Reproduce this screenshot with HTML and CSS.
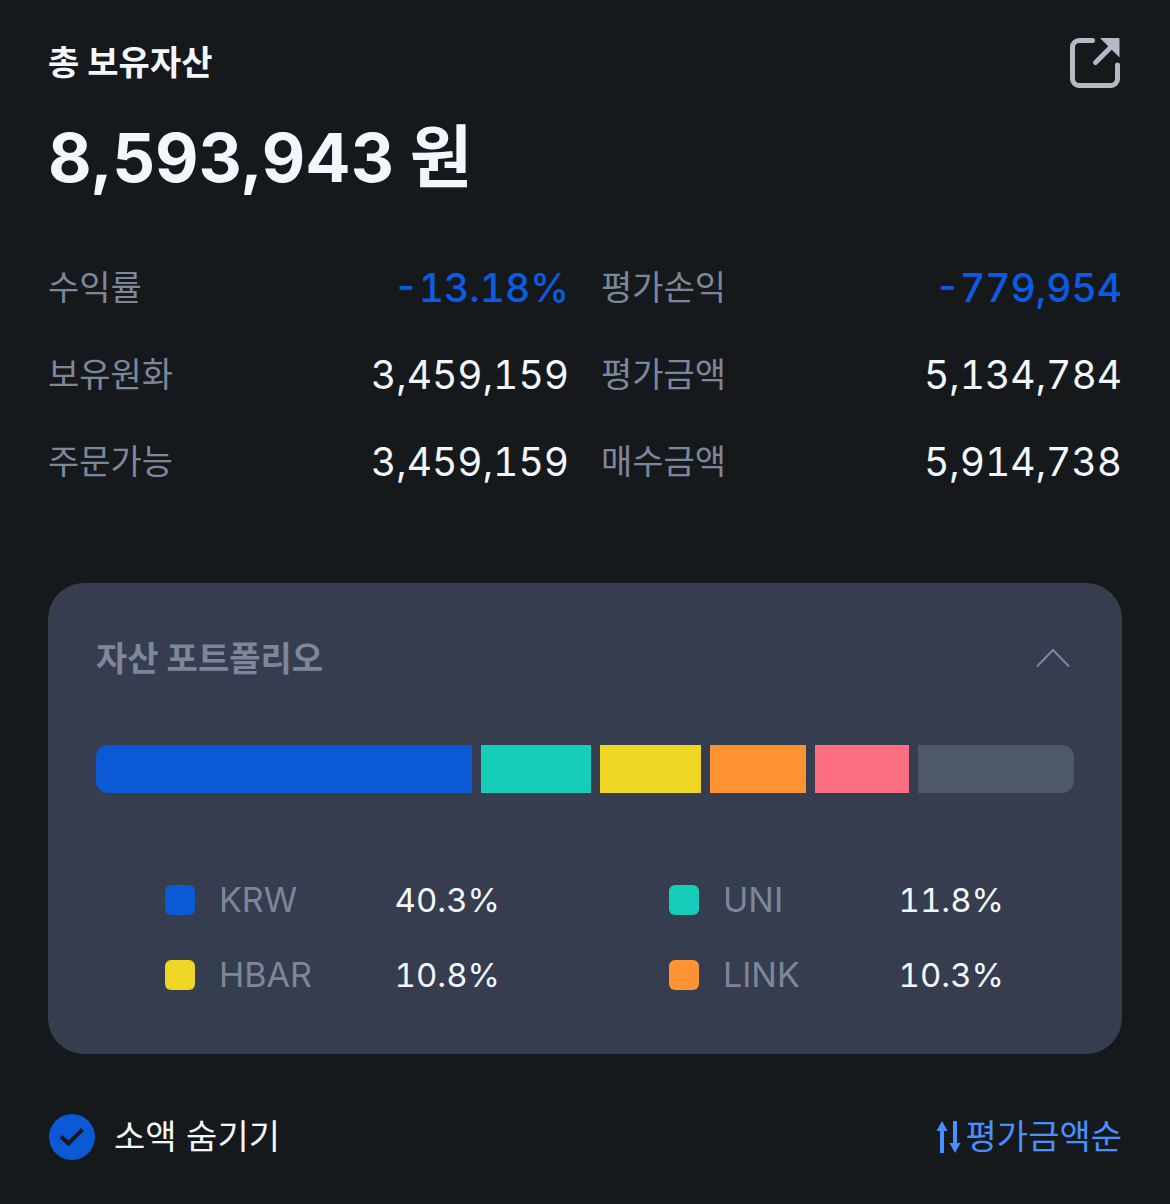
FILE: index.html
```html
<!DOCTYPE html>
<html lang="ko">
<head>
    <meta charset="UTF-8">
    <meta name="viewport" content="width=device-width, initial-scale=1.0">
    <title>총 보유자산</title>
    <link rel="stylesheet" href="styles.css">
</head>
<body>
    <main class="container">
        <header class="topo">
            <h1>총 보유자산</h1>
            <button type="button" class="btn-share" aria-label="공유">
                <svg width="52" height="52" viewBox="0 0 52 52" fill="none">
                    <path d="M22.500 3.500H9A6.500 6.500 0 0 0 2.500 10V42A6.500 6.500 0 0 0 9 48.500H41A6.500 6.500 0 0 0 47.500 42V28" stroke="#b3bac6" stroke-width="5" stroke-linecap="round"/>
                    <path d="M25.500 25.500L40 11" stroke="#b3bac6" stroke-width="5" stroke-linecap="round"/>
                    <path d="M30 1H48.500a1 1 0 0 1 1 1V20.500Z" fill="#b3bac6"/>
                </svg>
            </button>
        </header>

        <p class="total">8,593,943 <span class="won">원</span></p>

        <dl class="resumo">
            <div class="item"><dt>수익률</dt><dd class="queda">-13.18%</dd></div>
            <div class="item"><dt>평가손익</dt><dd class="queda">-779,954</dd></div>
            <div class="item"><dt>보유원화</dt><dd>3,459,159</dd></div>
            <div class="item"><dt>평가금액</dt><dd>5,134,784</dd></div>
            <div class="item"><dt>주문가능</dt><dd>3,459,159</dd></div>
            <div class="item"><dt>매수금액</dt><dd>5,914,738</dd></div>
        </dl>

        <section class="card">
            <div class="card-topo">
                <h2>자산 포트폴리오</h2>
                <button type="button" class="btn-toggle" aria-label="접기">
                    <svg width="36" height="22" viewBox="0 0 36 22" fill="none">
                        <path d="M2 18.500L18 2L34 18.500" stroke="#7d8799" stroke-width="2"/>
                    </svg>
                </button>
            </div>

            <div class="barra">
                <span class="krw" style="flex-grow: 376"></span>
                <span class="uni" style="flex-grow: 110"></span>
                <span class="hbar" style="flex-grow: 101"></span>
                <span class="link" style="flex-grow: 96"></span>
                <span class="rosa" style="flex-grow: 94"></span>
                <span class="outros" style="flex-grow: 156"></span>
            </div>

            <ul class="legenda">
                <li><span class="cor krw"></span><span class="moeda">KRW</span><span class="valor">40.3%</span></li>
                <li><span class="cor uni"></span><span class="moeda">UNI</span><span class="valor">11.8%</span></li>
                <li><span class="cor hbar"></span><span class="moeda">HBAR</span><span class="valor">10.8%</span></li>
                <li><span class="cor link"></span><span class="moeda">LINK</span><span class="valor">10.3%</span></li>
            </ul>
        </section>

        <footer class="rodape">
            <label class="ocultar" for="ocultar">
                <input type="checkbox" id="ocultar" checked>
                소액 숨기기
            </label>
            <button type="button" class="btn-ordem">
                <svg width="26" height="34" viewBox="0 0 26 34" fill="#4a8fff">
                    <path d="M6 1L11.500 11H8V33H4V11H0.500Z"/>
                    <path d="M17 1H21V23H24.500L19 33L13.500 23H17Z"/>
                </svg>
                평가금액순
            </button>
        </footer>
    </main>
</body>
</html>
```
FILE: styles.css
```css
* {
    box-sizing: border-box;
}

body {
    font-family: Inter, "Noto Sans CJK KR", sans-serif;
    font-size: 34px;
    line-height: 48px;
    background-color: #16191c;
    color: #f3f7fd;
    margin: 0;
}

.container {
    padding: 37px 48px 44px;
}

h1, h2, p, dl, dd, ul {
    margin: 0;
    padding: 0;
}

h1, h2 {
    font-size: 34px;
    font-weight: 700;
}

button {
    display: flex;
    align-items: center;
    padding: 0;
    border: none;
    background: none;
    font: inherit;
    cursor: pointer;
}

.topo, .card-topo, .rodape {
    display: flex;
    justify-content: space-between;
    align-items: center;
}

.total {
    margin-top: 20px;
    font-size: 67px;
    font-weight: 700;
    line-height: 96px;
}

.won {
    font-size: 68px;
}

.resumo {
    display: grid;
    grid-template-columns: 1fr 1fr;
    gap: 39px 32px;
    margin-top: 58px;
}

.item {
    display: flex;
    justify-content: space-between;
    align-items: center;
}

.item dt {
    color: #7d8799;
}

.item dd {
    font-size: 39px;
    font-variant-numeric: tabular-nums;
}

.item .queda {
    color: #0b5ce2;
    font-weight: 500;
}

.card {
    margin-top: 97px;
    padding: 52px 48px 55px;
    border-radius: 36px;
    background-color: #363d4e;
}

.card h2 {
    color: #7d8799;
}

.btn-toggle {
    margin-right: 3px;
}

.barra {
    display: flex;
    gap: 9px;
    height: 48px;
    margin-top: 62px;
    border-radius: 12px;
    overflow: hidden;
}

.barra span {
    flex-basis: 0;
}

.legenda {
    display: grid;
    grid-template-columns: 1fr 1fr;
    gap: 27px 169px;
    margin-top: 83px;
    padding: 0 70px 0 69px;
    list-style: none;
}

.legenda li {
    display: flex;
    align-items: center;
}

.cor {
    width: 30px;
    height: 30px;
    margin-right: 24px;
    border-radius: 6px;
}

.moeda {
    color: #7d8799;
}

.valor {
    margin-left: auto;
    font-size: 33px;
    font-variant-numeric: tabular-nums;
}

.krw {
    background-color: #0b59d5;
}

.uni {
    background-color: #15cdb9;
}

.hbar {
    background-color: #efd624;
}

.link {
    background-color: #ff9232;
}

.rosa {
    background-color: #fb6f80;
}

.outros {
    background-color: #4f5868;
}

.rodape {
    margin-top: 59px;
}

.ocultar {
    display: flex;
    align-items: center;
    gap: 18px;
    cursor: pointer;
}

.ocultar input {
    appearance: none;
    width: 46px;
    height: 46px;
    margin: 0 1px;
    border-radius: 50%;
    background-color: #4f5868;
}

.ocultar input:checked {
    background: #0b59d5 url("data:image/svg+xml,%3Csvg xmlns='http://www.w3.org/2000/svg' viewBox='0 0 46 46'%3E%3Cpath d='M12 22.500L19.500 29.500L33.500 15.500' fill='none' stroke='%2316191c' stroke-width='4'/%3E%3C/svg%3E");
}

.btn-ordem {
    gap: 4px;
    color: #4a8fff;
}
```
